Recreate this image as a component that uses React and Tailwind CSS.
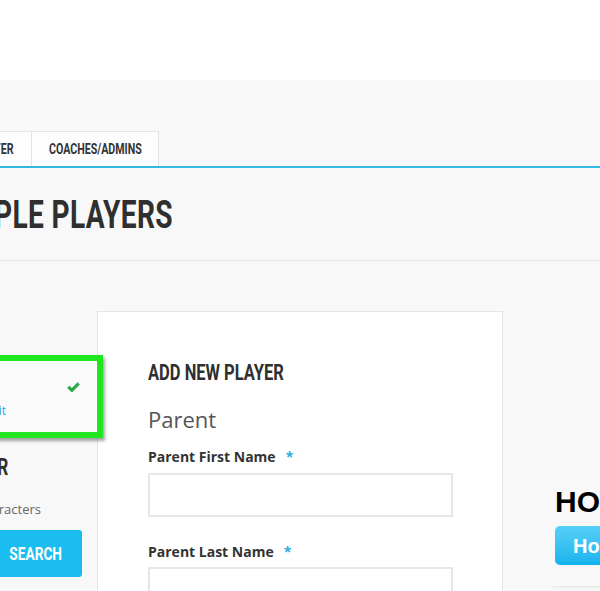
import React from "react";

const cond = { fontFamily: "Roboto, 'Liberation Sans', sans-serif" };
const open = { fontFamily: "'Open Sans', 'Liberation Sans', sans-serif" };
const arial = { fontFamily: "'Liberation Sans', Arial, sans-serif" };

export default function App() {
  return (
    <div className="w-[600px] h-[591px] overflow-hidden bg-[#f8f8f8] relative">
      <div className="h-[80px] bg-white" />
      {/* tabs */}
      <div className="pt-[51px]">
        <div className="flex h-[35px]">
          <div
            className="w-[92px] ml-[-60px] shrink-0 flex justify-end items-center pr-[17px] bg-[#fdfdfd] border border-b-0 border-[#e4e4e4]"
            style={cond}
          >
            <span className="inline-block whitespace-nowrap text-[15px] font-bold text-[#333] scale-x-[0.71] origin-right">
              ROSTER
            </span>
          </div>
          <div
            className="w-[128px] ml-[-1px] shrink-0 flex justify-center items-center bg-[#fdfdfd] border border-b-0 border-[#e4e4e4]"
            style={cond}
          >
            <span className="inline-block whitespace-nowrap text-[15px] font-bold text-[#333] scale-x-[0.71]">
              COACHES/ADMINS
            </span>
          </div>
        </div>
        <div className="h-[2px] bg-[#33b8e2]" />
      </div>

      {/* heading */}
      <div className="mt-[28px] w-[173px] flex justify-end" style={cond}>
        <h1 className="shrink-0 whitespace-nowrap text-[39px] leading-none font-bold text-[#2f2f2f] scale-x-[0.72] origin-right tracking-[0.5px]">
          ADD MULTIPLE PLAYERS
        </h1>
      </div>
      <div className="mt-[25px] h-px bg-[#e3e3e3]" />

      {/* main row */}
      <div className="flex items-start">
        {/* left column */}
        <div className="w-[97px] shrink-0 pt-[94px]">
          <div className="relative z-10 ml-[-30px] w-[133px] h-[83px] border-[6px] border-[#1fe61f] bg-[#fafafa] shadow-[2px_3px_3px_rgba(0,0,0,0.35)] pt-[21px] pr-[17px]">
            <div className="flex justify-end">
              <svg width="13" height="10" viewBox="0 0 13 10">
                <path d="M1.3 4.8 L4.9 8.3 L11.7 1.4" fill="none" stroke="#2aa84a" strokeWidth="3.2" />
              </svg>
            </div>
            <div className="w-[30px] flex justify-end mt-[13px]" style={open}>
              <span className="shrink-0 whitespace-nowrap text-[12px] leading-none text-[#29abe2]">
                Edit
              </span>
            </div>
          </div>
          <div className="mt-[17px] w-[8px] flex justify-end" style={cond}>
            <span className="shrink-0 whitespace-nowrap text-[24px] leading-none font-bold text-[#2f2f2f] scale-x-[0.72] origin-right">
              SEARCH PLAYER
            </span>
          </div>
          <div className="mt-[24px] w-[41px] flex justify-end" style={open}>
            <span className="shrink-0 whitespace-nowrap text-[13px] leading-none text-[#666]">
              Minimum 3 characters
            </span>
          </div>
          <button
            className="mt-[14px] ml-[-10px] w-[92px] h-[47px] rounded-[3px] bg-[#1bbdf0] flex items-center justify-center"
            style={cond}
          >
            <span className="inline-block text-[18px] font-bold text-white scale-x-[0.76]">
              SEARCH
            </span>
          </button>
        </div>

        {/* card */}
        <div className="mt-[50px] w-[406px] h-[400px] shrink-0 bg-white border border-[#e6e6e6] pl-[50px] pt-[50px]">
          <h2
            className="text-[22px] leading-none font-bold text-[#2f2f2f] scale-x-[0.75] origin-left whitespace-nowrap"
            style={cond}
          >
            ADD NEW PLAYER
          </h2>
          <div className="mt-[24px] text-[22px] leading-none text-[#555]" style={open}>
            Parent
          </div>
          <label className="block mt-[20px] text-[14px] leading-none font-bold text-[#333]" style={open}>
            Parent First Name<span className="ml-[10px] text-[#2aaee0]">*</span>
          </label>
          <div className="mt-[9px] w-[305px] h-[44px] border-2 border-[#e6e6e6] bg-white" />
          <label className="block mt-[28px] text-[14px] leading-none font-bold text-[#333]" style={open}>
            Parent Last Name<span className="ml-[10px] text-[#2aaee0]">*</span>
          </label>
          <div className="mt-[8px] w-[305px] h-[44px] border-2 border-[#e6e6e6] bg-white" />
        </div>

        {/* sidebar */}
        <div className="ml-[52px] w-[220px] shrink-0 pt-[226px]" style={arial}>
          <div className="text-[30px] leading-none font-bold text-black whitespace-nowrap">
            HOW TO
          </div>
          <div className="mt-[9px] w-[160px] h-[39px] rounded-[5px] bg-gradient-to-b from-[#55d0f8] to-[#10b3ee] flex items-center pl-[18px]">
            <span className="text-[20px] font-bold text-white whitespace-nowrap">
              How to
            </span>
          </div>
          <div className="mt-[21px] ml-[-2px] h-[2px] bg-[#ececec]" />
        </div>
      </div>
    </div>
  );
}
